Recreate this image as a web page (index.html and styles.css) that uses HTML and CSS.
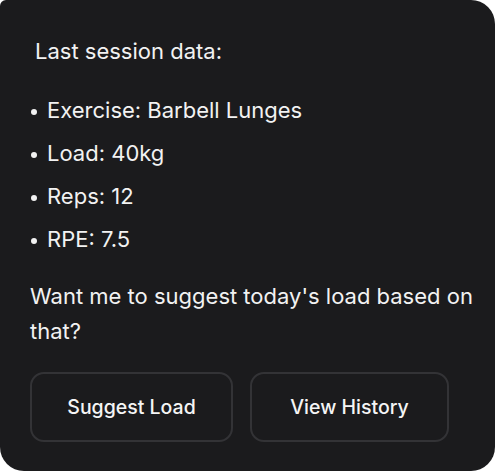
FILE: index.html
```
<!DOCTYPE html>
<html>
<head>
<meta charset="utf-8">
<link rel="stylesheet" href="styles.css">
</head>
<body>
<div class="card">
  <p class="title">Last session data:</p>
  <ul class="list">
    <li>Exercise: Barbell Lunges</li>
    <li>Load: 40kg</li>
    <li>Reps: 12</li>
    <li>RPE: 7.5</li>
  </ul>
  <p class="question">Want me to suggest today's load based on that?</p>
  <div class="actions">
    <button class="btn">Suggest Load</button>
    <button class="btn">View History</button>
  </div>
</div>
</body>
</html>
```
FILE: styles.css
```
html, body {
  margin: 0;
  padding: 0;
  background: #ffffff;
}
body {
  font-family: Inter, "Noto Sans", sans-serif;
  width: 496px;
  height: 473px;
}
.card {
  box-sizing: border-box;
  width: 495px;
  height: 471px;
  background: #1b1b1d;
  border-radius: 6px 24px 24px 24px;
  color: #f2f2f2;
  padding: 35px 20px 0 30px;
  font-size: 22px;
}
.title {
  margin: 0 0 0 5px;
  line-height: 32px;
}
.list {
  list-style: none;
  margin: 27px 0 0 0;
  padding: 0;
}
.list li {
  line-height: 32px;
  margin-bottom: 11px;
  display: flex;
}
.list li::before {
  content: "";
  width: 6px;
  height: 6px;
  border-radius: 50%;
  background: #f2f2f2;
  margin: 15px 10px 0 1px;
  flex: none;
}
.question {
  margin: 24px 0 0 0;
  line-height: 35px;
}
.actions {
  display: grid;
  grid-template-columns: 203px 199px;
  gap: 17px;
  margin-top: 23px;
}
.btn {
  height: 70px;
  background: transparent;
  border: 2px solid #333336;
  border-radius: 14px;
  color: #f5f5f5;
  font-family: Inter, "Noto Sans", sans-serif;
  font-size: 19.5px;
  font-weight: 500;
  padding: 0;
}
```
